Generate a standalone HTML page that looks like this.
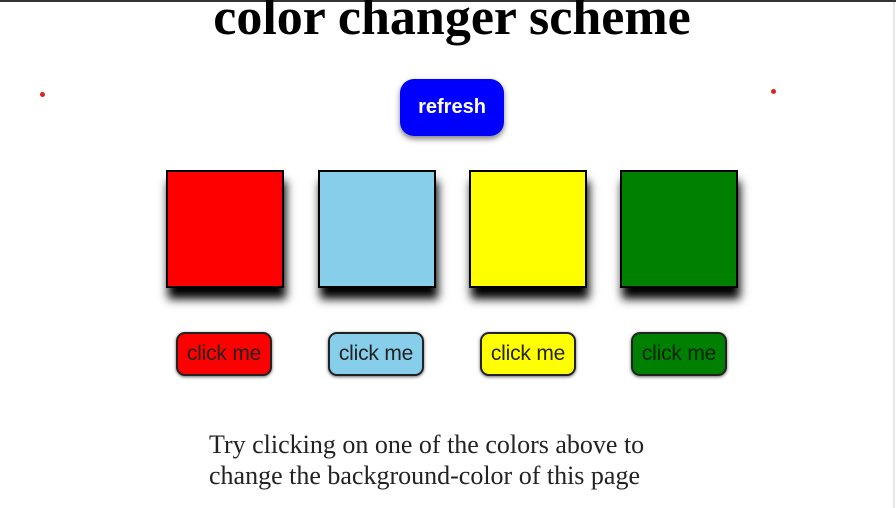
<!DOCTYPE html>
<html><head><style>
body{margin:0;width:896px;height:508px;background:#fff;position:relative;overflow:hidden;font-family:"Liberation Sans",sans-serif}
.top{position:absolute;left:0;top:0;width:896px;height:2px;background:#333}
.rt{position:absolute;left:893px;top:2px;width:2px;height:506px;background:#e6e6e6}
h1{position:absolute;left:0;width:904px;top:-12px;margin:0;text-align:center;font:bold 52px "Liberation Serif",serif;color:#000;line-height:60px}
.dot{position:absolute;width:5px;height:5px;border-radius:50%;background:#d22}
.ref{position:absolute;left:400px;top:79px;width:104px;height:57px;border-radius:14px;background:#00f;color:#fff;font-weight:bold;font-size:20px;text-align:center;line-height:56px;box-shadow:0 3px 6px rgba(0,0,0,.5)}
.sq{position:absolute;top:170px;width:114px;height:114px;border:2px solid #000;box-shadow:2px 11px 9px #000}
.bt{position:absolute;top:332px;width:92px;height:40px;border:2px solid #222;border-radius:9px;font-size:21px;line-height:40px;text-align:center;color:#222;box-shadow:0 1px 3px rgba(0,0,0,.6);letter-spacing:-0.2px}
p{position:absolute;left:209px;top:429px;margin:0;font:26px "Liberation Serif",serif;color:#222;line-height:31px;white-space:nowrap}
</style></head><body>
<div class="top"></div><div class="rt"></div>
<h1>color changer scheme</h1>
<div class="dot" style="left:40px;top:92px"></div>
<div class="dot" style="left:771px;top:89px"></div>
<div class="ref">refresh</div>
<div class="sq" style="left:166px;background:#f00"></div>
<div class="sq" style="left:318px;background:#87ceeb"></div>
<div class="sq" style="left:469px;background:#ff0"></div>
<div class="sq" style="left:620px;background:#008000"></div>
<div class="bt" style="left:176px;background:#f00">click me</div>
<div class="bt" style="left:328px;background:#87ceeb">click me</div>
<div class="bt" style="left:480px;background:#ff0">click me</div>
<div class="bt" style="left:631px;background:#008000;color:#002200">click me</div>
<p>Try clicking on one of the colors above to<br>change the background-color of this page</p>
</body></html>
